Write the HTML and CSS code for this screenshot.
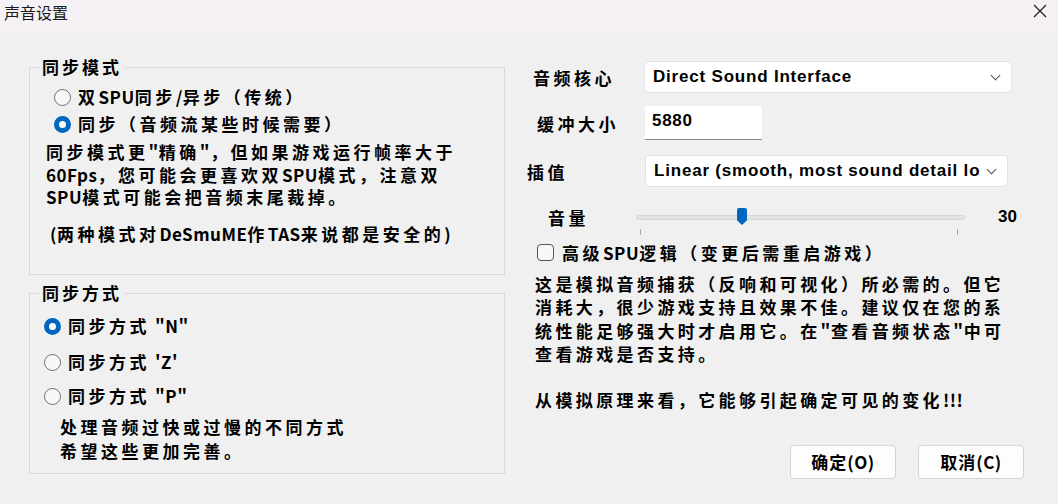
FILE: index.html
```html
<!DOCTYPE html>
<html lang="zh-CN">
<head>
  <meta charset="UTF-8">
  <title>声音设置</title>
  <link rel="stylesheet" href="styles.css">
</head>
<body>
  <div class="dialog">
    <div class="titlebar">
      <span class="title">声音设置</span>
      <svg class="close" width="16" height="16" viewBox="0 0 16 16">
        <path d="M2 2 L14 14 M14 2 L2 14" stroke="#222" stroke-width="1.3" fill="none"/>
      </svg>
    </div>

    <div class="content">
      <div class="left">
        <fieldset class="group group-mode">
          <legend>同步模式</legend>
          <div class="radio-row r-mode1"><span class="radio"></span>双<span class="en">SPU</span>同步<span class="en">/</span>异步（传统）</div>
          <div class="radio-row r-mode2"><span class="radio checked"></span>同步（音频流某些时候需要）</div>
          <p class="mode-note">同步模式更<span class="en">"</span>精确<span class="en">"</span>，但如果游戏运行帧率大于<br><span class="en">60Fps</span>，您可能会更喜欢双<span class="en">SPU</span>模式，注意双<br><span class="en">SPU</span>模式可能会把音频末尾裁掉。</p>
          <p class="mode-safe"><span class="en">(</span>两种模式对<span class="en">DeSmuME</span>作<span class="en">TAS</span>来说都是安全的<span class="en">)</span></p>
        </fieldset>

        <fieldset class="group group-method">
          <legend>同步方式</legend>
          <div class="radio-row r-m1"><span class="radio checked"></span>同步方式<span class="en q">"N"</span></div>
          <div class="radio-row r-m2"><span class="radio"></span>同步方式<span class="en q">'Z'</span></div>
          <div class="radio-row r-m3"><span class="radio"></span>同步方式<span class="en q">"P"</span></div>
          <p class="method-note">处理音频过快或过慢的不同方式<br>希望这些更加完善。</p>
        </fieldset>
      </div>

      <div class="right">
        <div class="row row-core">
          <span class="lbl lbl-core">音频核心</span>
          <div class="combo combo-core"><span>Direct Sound Interface</span><span class="chev"></span></div>
        </div>
        <div class="row row-buf">
          <span class="lbl lbl-buf">缓冲大小</span>
          <div class="textbox">5880</div>
        </div>
        <div class="row row-interp">
          <span class="lbl lbl-interp">插值</span>
          <div class="combo combo-interp"><span>Linear (smooth, most sound detail lo</span><span class="chev"></span></div>
        </div>
        <div class="row row-vol">
          <span class="lbl lbl-vol">音量</span>
          <div class="slider">
            <div class="track"></div>
            <div class="thumb"></div>
            <div class="tick tick-l"></div>
            <div class="tick tick-r"></div>
          </div>
          <span class="vol-val">30</span>
        </div>
        <div class="row row-check">
          <span class="checkbox"></span>高级<span class="en">SPU</span>逻辑（变更后需重启游戏）
        </div>
        <p class="spu-note">这是模拟音频捕获（反响和可视化）所必需的。但它<br>消耗大，很少游戏支持且效果不佳。建议仅在您的系<br>统性能足够强大时才启用它。在<span class="en">"</span>查看音频状态<span class="en">"</span>中可<br>查看游戏是否支持。<br><br>从模拟原理来看，它能够引起确定可见的变化<span class="en">!!!</span></p>
        <div class="buttons">
          <div class="btn">确定<span class="en">(O)</span></div>
          <div class="btn">取消<span class="en">(C)</span></div>
        </div>
      </div>
    </div>
  </div>
</body>
</html>
```

FILE: styles.css
```css
body {
  margin: 0;
  background: #f0f0f0;
  font-family: "Noto Sans CJK SC", "Liberation Sans", sans-serif;
  color: #000;
}

.dialog {
  width: 1058px;
  height: 504px;
  background: #f0f0f0;
  overflow: hidden;
}

.titlebar {
  height: 33px;
  background: #f5f1f5;
  display: flex;
  align-items: center;
  justify-content: space-between;
  padding: 0 10px 0 4px;
  box-sizing: border-box;
}

.title {
  font-size: 16px;
  color: #1a1a1a;
  margin-top: -10px;
}

.close {
  margin-top: -12px;
}

.content {
  display: flex;
}

.en {
  letter-spacing: 0.5px;
}

.q {
  margin-left: 5px;
}

.left {
  width: 476px;
  margin-left: 29px;
}

/* group boxes */
.group {
  margin: 24px 0 0 0;
  padding: 0;
  border: 1px solid #dadada;
  font-size: 17px;
  font-weight: bold;
  letter-spacing: 3.5px;
}

.group legend {
  margin-left: 9px;
  padding: 0 3px 0 3px;
  line-height: 20px;
  font-size: 17px;
  letter-spacing: 3px;
}

.group-mode {
  height: 218px;
  box-sizing: border-box;
}

.group-method {
  margin-top: 8px;
  height: 191px;
  box-sizing: border-box;
}

.radio-row {
  display: flex;
  align-items: center;
  height: 24px;
  line-height: 24px;
  white-space: nowrap;
}

.radio {
  width: 17px;
  height: 17px;
  border-radius: 50%;
  border: 1px solid #707070;
  background: #f8f8f8;
  box-sizing: border-box;
  margin-right: 7px;
  flex: none;
}

.radio.checked {
  border: 5.5px solid #0067c0;
  background: #fff;
}

.r-mode1 { margin: 8px 0 0 24px; }
.r-mode2 { margin: 3px 0 0 24px; }

.mode-note {
  margin: 5px 0 0 16px;
  line-height: 22.5px;
}

.mode-safe {
  margin: 13px 0 0 20px;
  line-height: 23px;
}

.r-m1 { margin: 11px 0 0 14px; }
.r-m2 { margin: 12px 0 0 14px; }
.r-m3 { margin: 10px 0 0 14px; }

.method-note {
  margin: 7px 0 0 30px;
  line-height: 24px;
}

/* right column */
.right {
  margin-left: 22px;
  width: 500px;
  font-size: 17px;
  font-weight: bold;
}

.row {
  display: flex;
  align-items: center;
}

.lbl {
  letter-spacing: 3.5px;
  white-space: nowrap;
}

.row-core { margin-top: 28px; height: 32px; }
.lbl-core { margin-left: 6px; width: 111px; }
.row-buf { margin-top: 13px; height: 34px; }
.lbl-buf { margin-left: 10px; width: 108px; }
.row-interp { margin-top: 15px; height: 32px; }
.lbl-interp { width: 118px; }

.combo {
  height: 32px;
  background: #fff;
  border: 1px solid #e3e3e3;
  border-radius: 4px;
  box-sizing: border-box;
  display: flex;
  align-items: center;
  justify-content: space-between;
  padding: 0 12px 0 8px;
  font-family: "Liberation Sans", sans-serif;
  font-size: 17px;
  letter-spacing: 0.8px;
  white-space: nowrap;
  overflow: hidden;
}

.combo-core { width: 368px; }
.combo-interp { width: 363px; }

.chev {
  width: 6px;
  height: 6px;
  border-right: 1px solid #555;
  border-bottom: 1px solid #555;
  transform: rotate(45deg);
  margin-top: -4px;
  flex: none;
}

.textbox {
  width: 117px;
  height: 34px;
  background: #fff;
  border-bottom: 1px solid #8a8a8a;
  border-radius: 3px 3px 0 0;
  box-sizing: border-box;
  padding: 5px 7px 0 7px;
  font-family: "Liberation Sans", sans-serif;
  font-size: 17px;
  letter-spacing: 0.7px;
}

.row-vol { margin-top: 14px; height: 28px; }
.lbl-vol { margin-left: 21px; width: 88px; padding-top: 4px; }

.slider {
  position: relative;
  width: 330px;
  height: 28px;
}

.track {
  position: absolute;
  left: 0;
  top: 14px;
  width: 327px;
  height: 3px;
  background: #e4e4e4;
  border: 1px solid #d6d6d6;
  border-radius: 2px;
}

.thumb {
  position: absolute;
  left: 101px;
  top: 7px;
  width: 10px;
  height: 17px;
  background: #0067c0;
  border-radius: 2px 2px 0 0;
  clip-path: polygon(0 0, 100% 0, 100% 72%, 50% 100%, 0 72%);
}

.tick {
  position: absolute;
  top: 28px;
  width: 1px;
  height: 6px;
  background: #a8a8a8;
}

.tick-l { left: 4px; }
.tick-r { left: 321px; }

.vol-val {
  margin-left: 32px;
  font-family: "Liberation Sans", sans-serif;
  font-size: 17px;
  margin-top: 4px;
}

.row-check {
  margin: 12px 0 0 10px;
  height: 22px;
  letter-spacing: 3.5px;
  white-space: nowrap;
}

.checkbox {
  width: 17px;
  height: 17px;
  border: 1px solid #555;
  border-radius: 4px;
  background: #f8f8f8;
  box-sizing: border-box;
  margin-right: 8px;
  flex: none;
}

.spu-note {
  margin: 9px 0 0 8px;
  line-height: 23.3px;
  letter-spacing: 3.4px;
  white-space: nowrap;
}

.buttons {
  display: flex;
  justify-content: flex-end;
  gap: 22px;
  margin-top: 33px;
  margin-right: 3px;
}

.btn {
  width: 106px;
  height: 34px;
  background: #fdfdfd;
  border: 1px solid #d4d4d4;
  border-radius: 4px;
  box-sizing: border-box;
  display: flex;
  align-items: center;
  justify-content: center;
  font-size: 17px;
  letter-spacing: 1px;
}
```
